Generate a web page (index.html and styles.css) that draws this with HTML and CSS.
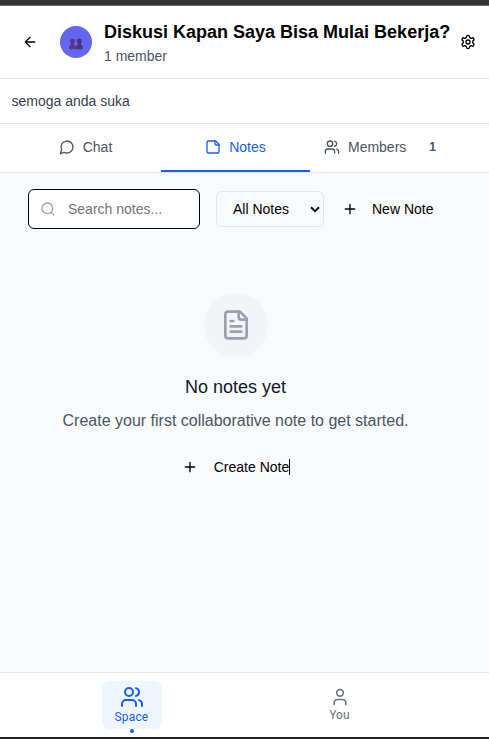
FILE: index.html
```html
<!DOCTYPE html>
<html lang="id">
<head>
<meta charset="utf-8">
<title>Space</title>
<link rel="stylesheet" href="styles.css">
</head>
<body>
<div class="app">
  <header class="header">
    <button class="icon-button back" aria-label="Back"><svg class="icon s16" viewBox="0 0 24 24"><path d="m12 19-7-7 7-7M19 12H5"/></svg></button>
    <div class="avatar">
      <svg width="14" height="12" viewBox="0 0 14 12"><path fill="#593781" d="M1 2.7Q1 .4 3.5.4T6 2.7q0 1.8-1 2.8v1.2q1.7.6 1.7 2.2v2.3H.2V8.9q0-1.6 1.7-2.2V5.500Q1 4.500 1 2.700Z"/><path fill="#49337f" d="M7.800 2.700Q7.800.4 10.300.4t2.500 2.300q0 1.800-.9 2.800v1.200q1.700.6 1.700 2.200v2.300H7.100V8.900q0-1.600 1.700-2.200V5.500q-1-1-1-2.800Z"/></svg>
    </div>
    <div class="heading">
      <h1>Diskusi Kapan Saya Bisa Mulai Bekerja?</h1>
      <p>1 member</p>
    </div>
    <button class="icon-button" aria-label="Settings"><svg class="icon s16" viewBox="0 0 24 24"><path d="M12.22 2h-.44a2 2 0 0 0-2 2v.18a2 2 0 0 1-1 1.73l-.43.25a2 2 0 0 1-2 0l-.15-.08a2 2 0 0 0-2.73.73l-.22.38a2 2 0 0 0 .73 2.73l.15.1a2 2 0 0 1 1 1.72v.51a2 2 0 0 1-1 1.74l-.15.09a2 2 0 0 0-.73 2.73l.22.38a2 2 0 0 0 2.73.73l.15-.08a2 2 0 0 1 2 0l.43.25a2 2 0 0 1 1 1.73V20a2 2 0 0 0 2 2h.44a2 2 0 0 0 2-2v-.18a2 2 0 0 1 1-1.73l.43-.25a2 2 0 0 1 2 0l.15.08a2 2 0 0 0 2.73-.73l.22-.39a2 2 0 0 0-.73-2.73l-.15-.08a2 2 0 0 1-1-1.74v-.5a2 2 0 0 1 1-1.74l.15-.09a2 2 0 0 0 .73-2.73l-.22-.38a2 2 0 0 0-2.73-.73l-.15.08a2 2 0 0 1-2 0l-.43-.25a2 2 0 0 1-1-1.73V4a2 2 0 0 0-2-2z"/><circle cx="12" cy="12" r="3"/></svg></button>
  </header>
  <p class="description">semoga anda suka</p>
  <nav class="tabs">
    <button class="tab"><svg class="icon s16" viewBox="0 0 24 24"><path d="M7.9 20A9 9 0 1 0 4 16.1L2 22Z"/></svg>Chat</button>
    <button class="tab active"><svg class="icon s16" viewBox="0 0 24 24"><path d="M16 3H5a2 2 0 0 0-2 2v14a2 2 0 0 0 2 2h14a2 2 0 0 0 2-2V8Z"/><path d="M15 3v4a2 2 0 0 0 2 2h4"/></svg>Notes</button>
    <button class="tab"><svg class="icon s16" viewBox="0 0 24 24"><path d="M16 21v-2a4 4 0 0 0-4-4H6a4 4 0 0 0-4 4v2"/><circle cx="9" cy="7" r="4"/><path d="M22 21v-2a4 4 0 0 0-3-3.87M16 3.13a4 4 0 0 1 0 7.75"/></svg>Members<span class="count">1</span></button>
  </nav>
  <main class="content">
    <div class="toolbar">
      <label class="search"><svg class="icon s16" viewBox="0 0 24 24"><circle cx="11" cy="11" r="8"/><path d="m21 21-4.3-4.3"/></svg><input type="text" placeholder="Search notes..."></label>
      <button class="filter">All Notes<svg class="chevron" viewBox="0 0 10 7"><path d="m1 1.2 4 4 4-4"/></svg></button>
      <button class="action"><svg class="icon s16" viewBox="0 0 24 24"><path d="M5 12h14M12 5v14"/></svg>New Note</button>
    </div>
    <section class="empty">
      <div class="empty-icon"><svg class="icon s32" viewBox="0 0 24 24"><path d="M15 2H6a2 2 0 0 0-2 2v16a2 2 0 0 0 2 2h12a2 2 0 0 0 2-2V7Z"/><path d="M14 2v4a2 2 0 0 0 2 2h4M10 9H8M16 13H8M16 17H8"/></svg></div>
      <h2>No notes yet</h2>
      <p>Create your first collaborative note to get started.</p>
      <button class="action create"><svg class="icon s16" viewBox="0 0 24 24"><path d="M5 12h14M12 5v14"/></svg><span class="caret">Create Note</span></button>
    </section>
  </main>
  <footer class="bottom-nav">
    <button class="nav-item current"><svg class="icon s24" viewBox="0 0 24 24"><path d="M16 21v-2a4 4 0 0 0-4-4H6a4 4 0 0 0-4 4v2"/><circle cx="9" cy="7" r="4"/><path d="M22 21v-2a4 4 0 0 0-3-3.87M16 3.13a4 4 0 0 1 0 7.75"/></svg><span>Space</span></button>
    <button class="nav-item"><svg class="icon s20" viewBox="0 0 24 24"><path d="M19 21v-2a4 4 0 0 0-4-4H9a4 4 0 0 0-4 4v2"/><circle cx="12" cy="7" r="4"/></svg><span>You</span></button>
  </footer>
</div>
</body>
</html>
```
FILE: styles.css
```css
* { box-sizing: border-box; }
body { margin: 0; font-family: "Liberation Sans", Arial, sans-serif; font-size: 14px; line-height: 20px; color: #000; background: #fff; }
h1, h2, p { margin: 0; }
button { border: 0; padding: 0; margin: 0; background: none; font: inherit; color: inherit; }
.app { height: 739px; display: flex; flex-direction: column; overflow: hidden; border-top: 5px solid #333; border-bottom: 2px solid #242428; }
.icon { flex: none; fill: none; stroke: currentColor; stroke-width: 2; stroke-linecap: round; stroke-linejoin: round; }
.s16 { width: 16px; height: 16px; }
.s20 { width: 20px; height: 20px; }
.s24 { width: 24px; height: 24px; }
.s32 { width: 32px; height: 32px; }
.header { flex: none; height: 74px; display: flex; align-items: center; padding: 0 13px 0 22px; border-top: 1px solid #666; border-bottom: 1px solid #e5e7eb; }
.icon-button { display: flex; }
.avatar { width: 32px; height: 32px; margin: 0 12px 0 22px; border-radius: 50%; background: #6366f1; display: flex; align-items: center; justify-content: center; padding-top: 3px; padding-right: 1px; }
.heading { flex: 1; white-space: nowrap; }
.heading h1 { font-size: 18px; line-height: 28px; }
.heading p { color: #4a5565; }
.description { flex: none; height: 45px; padding: 12px 11.5px; border-bottom: 1px solid #e5e7eb; color: #364153; }
.tabs { flex: none; height: 49px; display: flex; border-bottom: 1px solid #e5e7eb; padding-left: 11px; }
.tab { width: 149px; height: 48px; display: flex; align-items: center; justify-content: center; gap: 8px; color: #4a5565; border-bottom: 2px solid transparent; }
.tab:first-child { width: 150px; padding-right: 1px; }
.tab.active { color: #155dfc; border-color: #155dfc; }
.count { font-size: 12px; font-weight: 700; margin: 0 9px 0 15px; }
.content { flex: 1; background: #f9fafb; padding: 16px 17px 0 28px; }
.toolbar { display: flex; align-items: center; height: 40px; }
.search { width: 172px; height: 40px; display: flex; align-items: center; gap: 12px; padding-left: 11px; border: 1px solid #000; border-radius: 6px; background: #fff; color: #99a1af; }
.search input { min-width: 0; flex: 1; border: 0; padding: 0; outline: 0; background: none; font: inherit; }
.search input::placeholder { color: #757575; }
.filter { width: 108px; height: 36px; margin-left: 16px; padding: 0 3px 0 16px; display: flex; align-items: center; justify-content: space-between; border: 1px solid #e5e7eb; border-radius: 6px; }
.chevron { width: 10px; height: 7px; fill: none; stroke: #000; stroke-width: 2; }
.action { display: flex; align-items: center; gap: 14px; }
.toolbar .action { margin-left: 18px; }
.empty { width: 415px; display: flex; flex-direction: column; align-items: center; padding-top: 64px; }
.empty-icon { width: 64px; height: 64px; margin-left: 1px; border-radius: 50%; background: #f3f4f6; color: #99a1af; display: flex; align-items: center; justify-content: center; }
.empty h2 { margin-top: 16px; font-size: 18px; line-height: 28px; font-weight: 400; color: #101828; }
.empty p { margin-top: 8px; font-size: 16px; line-height: 24px; color: #4a5565; }
.create { margin-top: 26px; gap: 16px; }
.caret { border-right: 1px solid #000; margin-right: -1px; line-height: 16px; }
.bottom-nav { flex: none; height: 65px; display: flex; justify-content: space-between; padding: 8px 119px 0 102px; border-top: 1px solid #e5e7eb; }
.nav-item { position: relative; width: 60px; height: 48px; display: flex; flex-direction: column; align-items: center; justify-content: center; border-radius: 8px; color: #6a7282; font-family: Roboto, sans-serif; font-size: 12px; line-height: 16px; letter-spacing: 0.15px; }
.nav-item span { margin-right: 1px; }
.nav-item.current { color: #155dfc; background: #eff6ff; }
.nav-item.current::after { content: ""; position: absolute; bottom: -4px; left: 28px; width: 4px; height: 4px; border-radius: 50%; background: #155dfc; }
```
